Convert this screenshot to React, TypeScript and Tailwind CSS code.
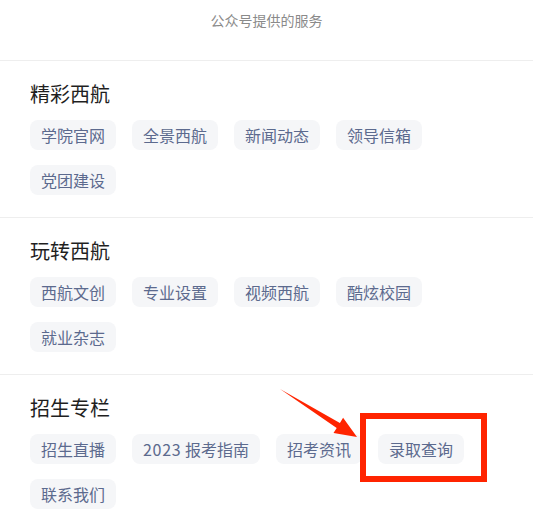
import React from "react";

const sections = [
  { title: "精彩西航", items: ["学院官网", "全景西航", "新闻动态", "领导信箱", "党团建设"] },
  { title: "玩转西航", items: ["西航文创", "专业设置", "视频西航", "酷炫校园", "就业杂志"] },
  { title: "招生专栏", items: ["招生直播", "2023 报考指南", "招考资讯", "录取查询", "联系我们"] },
];

export default function App() {
  return (
    <div
      className="relative w-[533px] h-[519px] overflow-hidden bg-white"
      style={{ fontFamily: '"Noto Sans CJK SC", "Noto Sans", sans-serif' }}
    >
      <div className="h-[60px] flex items-start justify-center pt-[10px] text-[14px] leading-[20px] text-[#8a8a8a]">
        公众号提供的服务
      </div>
      {sections.map((s) => (
        <div key={s.title} className="border-t border-[#eeeeee] pt-[19px] pb-[22px] pl-[30px] pr-[20px]">
          <div className="text-[20px] leading-[28px] text-[#1f1f1f] mb-[12px]">{s.title}</div>
          <div className="flex flex-wrap gap-x-[16px] gap-y-[15px]">
            {s.items.map((it) => (
              <div
                key={it}
                className="h-[30px] px-[11px] rounded-[8px] bg-[#f5f6f8] text-[16px] leading-[30px] text-[#5c6a8e] whitespace-pre"
              >
                {it.startsWith("2023") ? (
                  <>
                    <span className="tracking-[0.7px]">2023</span> 报考指南
                  </>
                ) : (
                  it
                )}
              </div>
            ))}
          </div>
        </div>
      ))}
      {/* annotation: red box */}
      <div className="absolute left-[360px] top-[413px] w-[127px] h-[69px] border-[6px] border-[#ff2400]" />
      {/* annotation: arrow */}
      <svg className="absolute left-0 top-0 pointer-events-none" width="533" height="519" viewBox="0 0 533 519">
        <polygon
          points="280,389 339.9,422.9 343.1,417.8 357,437 333.5,433 336.7,427.9"
          fill="#ff2400"
        />
      </svg>
    </div>
  );
}
